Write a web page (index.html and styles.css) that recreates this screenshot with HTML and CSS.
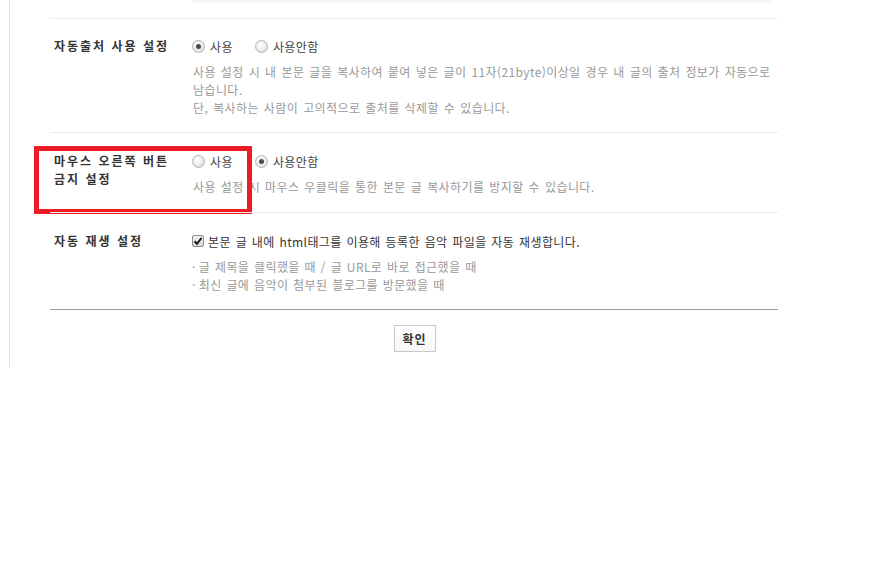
FILE: index.html
```html
<!DOCTYPE html>
<html lang="ko">
<head>
<meta charset="utf-8">
<title>블로그 설정</title>
<link rel="stylesheet" href="styles.css">
</head>
<body>
<div class="page">
  <div class="content">
    <div class="prev"><div class="prev-box"></div></div>

    <div class="row row-first">
      <div class="label">자동출처 사용 설정</div>
      <div class="field">
        <div class="options">
          <span class="opt"><span class="radio checked"></span>사용</span>
          <span class="opt"><span class="radio"></span>사용안함</span>
        </div>
        <p class="desc">사용 설정 시 내 본문 글을 복사하여 붙여 넣은 글이 11자(21byte)이상일 경우 내 글의 출처 정보가 자동으로 남습니다.<br>단, 복사하는 사람이 고의적으로 출처를 삭제할 수 있습니다.</p>
      </div>
    </div>

    <div class="row row-mouse">
      <div class="label">마우스 오른쪽 버튼<br>금지 설정</div>
      <div class="field">
        <div class="options">
          <span class="opt"><span class="radio"></span>사용</span>
          <span class="opt"><span class="radio checked"></span>사용안함</span>
        </div>
        <p class="desc">사용 설정 시 마우스 우클릭을 통한 본문 글 복사하기를 방지할 수 있습니다.</p>
      </div>
      <div class="highlight"></div>
    </div>

    <div class="row row-last">
      <div class="label">자동 재생 설정</div>
      <div class="field">
        <div class="options">
          <span class="opt check-opt"><span class="checkbox"><svg width="10" height="10" viewBox="0 0 10 10"><path d="M1.5 5.2 L4 7.8 L8.6 1.8" fill="none" stroke="#1e1e1e" stroke-width="2"/></svg></span>본문 글 내에 html태그를 이용해 등록한 음악 파일을 자동 재생합니다.</span>
        </div>
        <ul class="bullets">
          <li>글 제목을 클릭했을 때 / 글 URL로 바로 접근했을 때</li>
          <li>최신 글에 음악이 첨부된 블로그를 방문했을 때</li>
        </ul>
      </div>
    </div>

    <div class="actions">
      <button class="btn" type="button">확인</button>
    </div>
  </div>
</div>
</body>
</html>
```

FILE: styles.css
```css
html, body {
  margin: 0;
  padding: 0;
  background: #fff;
}

body {
  font-family: "Noto Sans CJK KR", "Noto Sans", sans-serif;
  font-size: 12px;
  color: #333;
}

.page {
  margin-left: 9px;
  border-left: 1px solid #e2e2e2;
  padding-bottom: 15px;
}

.content {
  margin-left: 40px;
  width: 728px;
}

.prev {
  height: 18px;
}

.prev-box {
  margin-left: 142px;
  width: 582px;
  height: 3px;
  background: #f8f8f8;
}

.row {
  position: relative;
  display: grid;
  grid-template-columns: 142px 1fr;
  border-top: 1px solid #ebebeb;
  padding: 17px 0 15px;
}

.row-mouse {
  padding-top: 18px;
  padding-bottom: 16px;
}

.row-last {
  padding-top: 18px;
  padding-bottom: 15px;
  border-bottom: 1px solid #9a9a9a;
}

.label {
  margin-top: 1px;
  padding-left: 4px;
  font-weight: 700;
  line-height: 18px;
  letter-spacing: 2px;
  color: #333;
}

.field {
  min-width: 0;
}

.options {
  display: flex;
  align-items: center;
  height: 20px;
  gap: 22px;
  color: #444;
}

.opt {
  display: flex;
  align-items: center;
  gap: 5px;
  white-space: nowrap;
  letter-spacing: 0.4px;
  word-spacing: 1px;
}

.check-opt {
  color: #333;
  gap: 4px;
}

.radio {
  box-sizing: border-box;
  width: 13px;
  height: 13px;
  border-radius: 50%;
  border: 1px solid #b4b4b4;
  background: radial-gradient(circle at 40% 35%, #ffffff 0%, #f0f0f0 40%, #d6d6d6 100%);
  display: flex;
  align-items: center;
  justify-content: center;
}

.radio.checked::after {
  content: "";
  width: 5px;
  height: 5px;
  border-radius: 50%;
  background: #4a4a4a;
}

.checkbox {
  box-sizing: border-box;
  width: 12px;
  height: 12px;
  border: 1px solid #8c8c8c;
  border-radius: 2px;
  background: linear-gradient(#f4f4f4, #d4d4d4);
  display: flex;
  align-items: center;
  justify-content: center;
}

.checkbox svg {
  display: block;
}

.desc {
  margin: 7px 0 0;
  padding-left: 1px;
  max-width: 590px;
  line-height: 18px;
  color: #999;
  word-break: keep-all;
  letter-spacing: 0.4px;
  word-spacing: 1.2px;
}

.bullets {
  list-style: none;
  margin: 7px 0 0;
  padding: 0;
  line-height: 18px;
  color: #999;
  letter-spacing: 0.4px;
  word-spacing: 1px;
}

.bullets li::before {
  content: "·";
  margin-right: 3px;
}

.highlight {
  position: absolute;
  left: -16px;
  top: 13px;
  width: 218px;
  height: 68px;
  box-sizing: border-box;
  border: 5px solid #ed1c24;
  pointer-events: none;
}

.actions {
  display: flex;
  justify-content: center;
  padding-top: 15px;
}

.btn {
  box-sizing: border-box;
  width: 42px;
  height: 27px;
  margin-left: 1px;
  padding: 0;
  border: 1px solid #c8c8c8;
  background: linear-gradient(#ffffff, #f7f7f7);
  font-family: "Noto Sans CJK KR", "Noto Sans", sans-serif;
  font-size: 12px;
  font-weight: 700;
  color: #333;
  letter-spacing: 1px;
}
```
